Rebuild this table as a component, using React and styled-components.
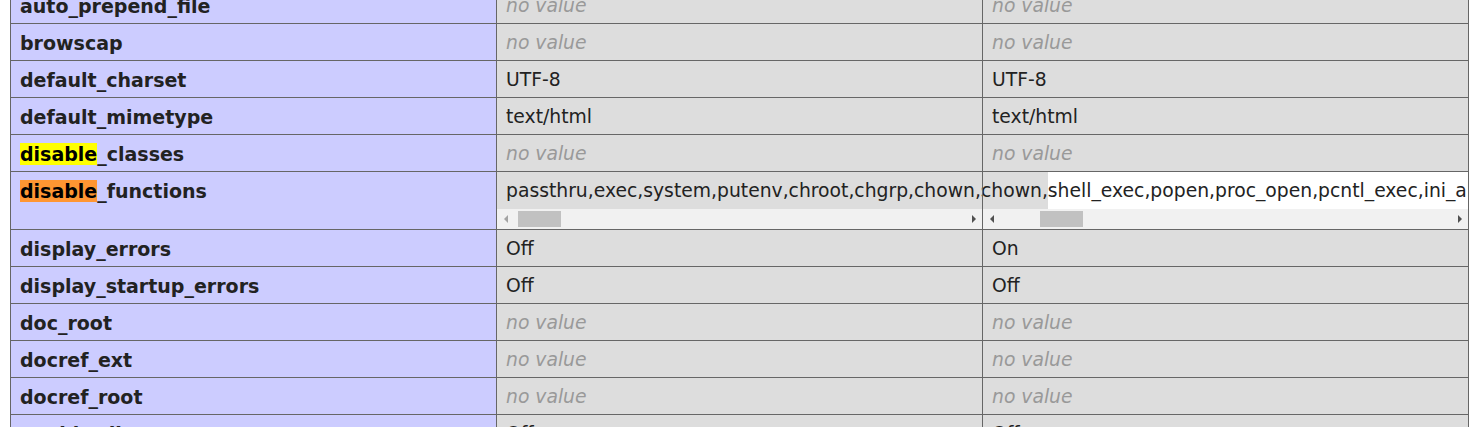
import React from "react";
import styled, { createGlobalStyle } from "styled-components";

const Global = createGlobalStyle`
  html, body { margin: 0; padding: 0; background: #fff; }
  body {
    font-family: "DejaVu Sans", Verdana, sans-serif;
    color: #222;
    overflow: hidden;
  }
`;

const Page = styled.div`
  padding: 0 0 0 10px;
  height: 427px;
  overflow: hidden;
`;

const Table = styled.table`
  margin-top: -14px;
  width: 1459px;
  table-layout: fixed;
  border-collapse: collapse;
  font-size: 18.75px;
`;

const Cell = styled.td`
  border: 1px solid #666;
  padding: 8px 9px 6px;
  line-height: 22px;
  vertical-align: top;
  white-space: nowrap;
  overflow: hidden;
`;

const KeyCell = styled(Cell)`
  background: #ccf;
  font-weight: bold;
  font-size: 19px;
  color: #222;
`;

const ValueCell = styled(Cell)`
  background: #ddd;
  color: #222;
`;

const ScrollCell = styled.td`
  border: 1px solid #666;
  background: #ddd;
  padding: 0;
  vertical-align: top;
  overflow: hidden;
`;

const NoValue = styled.i`
  color: #999;
`;

const Mark = styled.span`
  background: ${(p) => (p.$active ? "#ff9632" : "#ffff00")};
  color: #000;
`;

const ScrollBox = styled.div`
  width: 100%;
  overflow: hidden;
`;

const ScrollText = styled.div`
  display: flex;
  white-space: nowrap;
  padding-left: 9px;
  margin-left: ${(p) => p.$shift || 0}px;
  color: #222;
`;

const Segment = styled.span`
  flex: none;
  display: block;
  line-height: 22px;
  padding: 8px 0 7px;
  background: ${(p) => (p.$white ? "#fff" : "transparent")};
  ${(p) => (p.$white ? "padding-right: 400px;" : "")}
`;

const Track = styled.div`
  height: 20px;
  background: #f1f1f1;
  display: flex;
  align-items: center;
`;

const ArrowBtn = styled.div`
  width: 17px;
  height: 20px;
  flex: none;
  display: flex;
  align-items: center;
  justify-content: center;
`;

const ArrowLeft = styled.span`
  width: 0;
  height: 0;
  border-top: 4px solid transparent;
  border-bottom: 4px solid transparent;
  border-right: 4px solid ${(p) => (p.$disabled ? "#a3a3a3" : "#505050")};
`;

const ArrowRight = styled.span`
  width: 0;
  height: 0;
  border-top: 4px solid transparent;
  border-bottom: 4px solid transparent;
  border-left: 4px solid ${(p) => (p.$disabled ? "#a3a3a3" : "#505050")};
`;

const ThumbLane = styled.div`
  flex: 1;
  height: 100%;
  display: flex;
  align-items: center;
`;

const Thumb = styled.div`
  width: 43px;
  height: 16px;
  background: #c1c1c1;
  margin-left: ${(p) => p.$offset}px;
`;

function Scrollbar({ offset, leftDisabled }) {
  return (
    <Track>
      <ArrowBtn>
        <ArrowLeft $disabled={leftDisabled} />
      </ArrowBtn>
      <ThumbLane>
        <Thumb $offset={offset} />
      </ThumbLane>
      <ArrowBtn>
        <ArrowRight />
      </ArrowBtn>
    </Track>
  );
}

const FUNCS =
  "passthru,exec,system,putenv,chroot,chgrp,chown,shell_exec,popen,proc_open,pcntl_exec,ini_alter,ini_restore,dl,openlog,syslog,readlink,symlink,popepassthru";
const REST =
  "shell_exec,popen,proc_open,pcntl_exec,ini_alter,ini_restore,dl,openlog,syslog,readlink,symlink,popepassthru";

const rows = [
  { k: "auto_prepend_file", v: [null, null] },
  { k: "browscap", v: [null, null] },
  { k: "default_charset", v: ["UTF-8", "UTF-8"] },
  { k: "default_mimetype", v: ["text/html", "text/html"] },
  { k: "disable_classes", mark: "yellow", v: [null, null] },
  { k: "disable_functions", mark: "orange", scroll: true },
  { k: "display_errors", v: ["Off", "On"] },
  { k: "display_startup_errors", v: ["Off", "Off"] },
  { k: "doc_root", v: [null, null] },
  { k: "docref_ext", v: [null, null] },
  { k: "docref_root", v: [null, null] },
  { k: "enable_dl", v: ["Off", "Off"] },
];

function Key({ row }) {
  if (row.mark) {
    const rest = row.k.slice("disable".length);
    return (
      <KeyCell>
        <Mark $active={row.mark === "orange"}>disable</Mark>
        {rest}
      </KeyCell>
    );
  }
  return <KeyCell>{row.k}</KeyCell>;
}

function Value({ v }) {
  return <ValueCell>{v == null ? <NoValue>no value</NoValue> : v}</ValueCell>;
}

export default function App() {
  return (
    <Page>
      <Global />
      <Table>
        <tbody>
          {rows.map((row) => (
            <tr key={row.k}>
              <Key row={row} />
              {row.scroll ? (
                <>
                  <ScrollCell>
                    <ScrollBox>
                      <ScrollText>
                        <Segment>{FUNCS}</Segment>
                      </ScrollText>
                    </ScrollBox>
                    <Scrollbar offset={4} leftDisabled />
                  </ScrollCell>
                  <ScrollCell>
                    <ScrollBox>
                      <ScrollText $shift={-11}>
                        <Segment>chown,</Segment>
                        <Segment $white>{REST}</Segment>
                      </ScrollText>
                    </ScrollBox>
                    <Scrollbar offset={40} />
                  </ScrollCell>
                </>
              ) : (
                <>
                  <Value v={row.v[0]} />
                  <Value v={row.v[1]} />
                </>
              )}
            </tr>
          ))}
        </tbody>
      </Table>
    </Page>
  );
}
